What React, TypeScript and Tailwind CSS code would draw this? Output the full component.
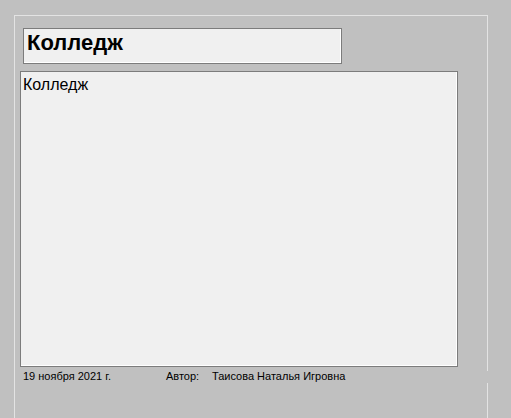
export default function App() {
  return (
    <div
      className="w-[511px] h-[418px] bg-[#c0c0c0] pt-[15px] pl-[14px] overflow-hidden"
      style={{ fontFamily: '"Liberation Sans", Arial, sans-serif' }}
    >
      <div className="relative w-[474px] h-[403px] border-t border-l border-r border-[#e3e3e3] flex flex-col">
        <div className="absolute right-[-1px] top-[355px] w-[1px] h-[12px] bg-[#c0c0c0]" />
        <div className="ml-[8px] mt-[12px] w-[319px] h-[36px] border border-[#7c7c7c] bg-[#f0f0f0] shadow-[inset_-1px_-1px_0_#ffffff] pl-[3px] pt-[2px]">
          <div className="text-[22px] leading-[24px] font-bold text-black">Колледж</div>
        </div>
        <div className="ml-[5px] mt-[7px] w-[438px] h-[296px] border border-[#7c7c7c] bg-[#f0f0f0] shadow-[inset_-1px_-1px_0_#ffffff] pl-[2px] pt-[4px]">
          <div className="text-[16px] leading-[18px] text-black">Колледж</div>
        </div>
        <div className="ml-[8px] mt-[3px] flex text-[11px] leading-[13px] text-black">
          <div className="w-[143px]">19 ноября 2021 г.</div>
          <div className="w-[46px]">Автор:</div>
          <div>Таисова Наталья Игровна</div>
        </div>
      </div>
    </div>
  );
}
